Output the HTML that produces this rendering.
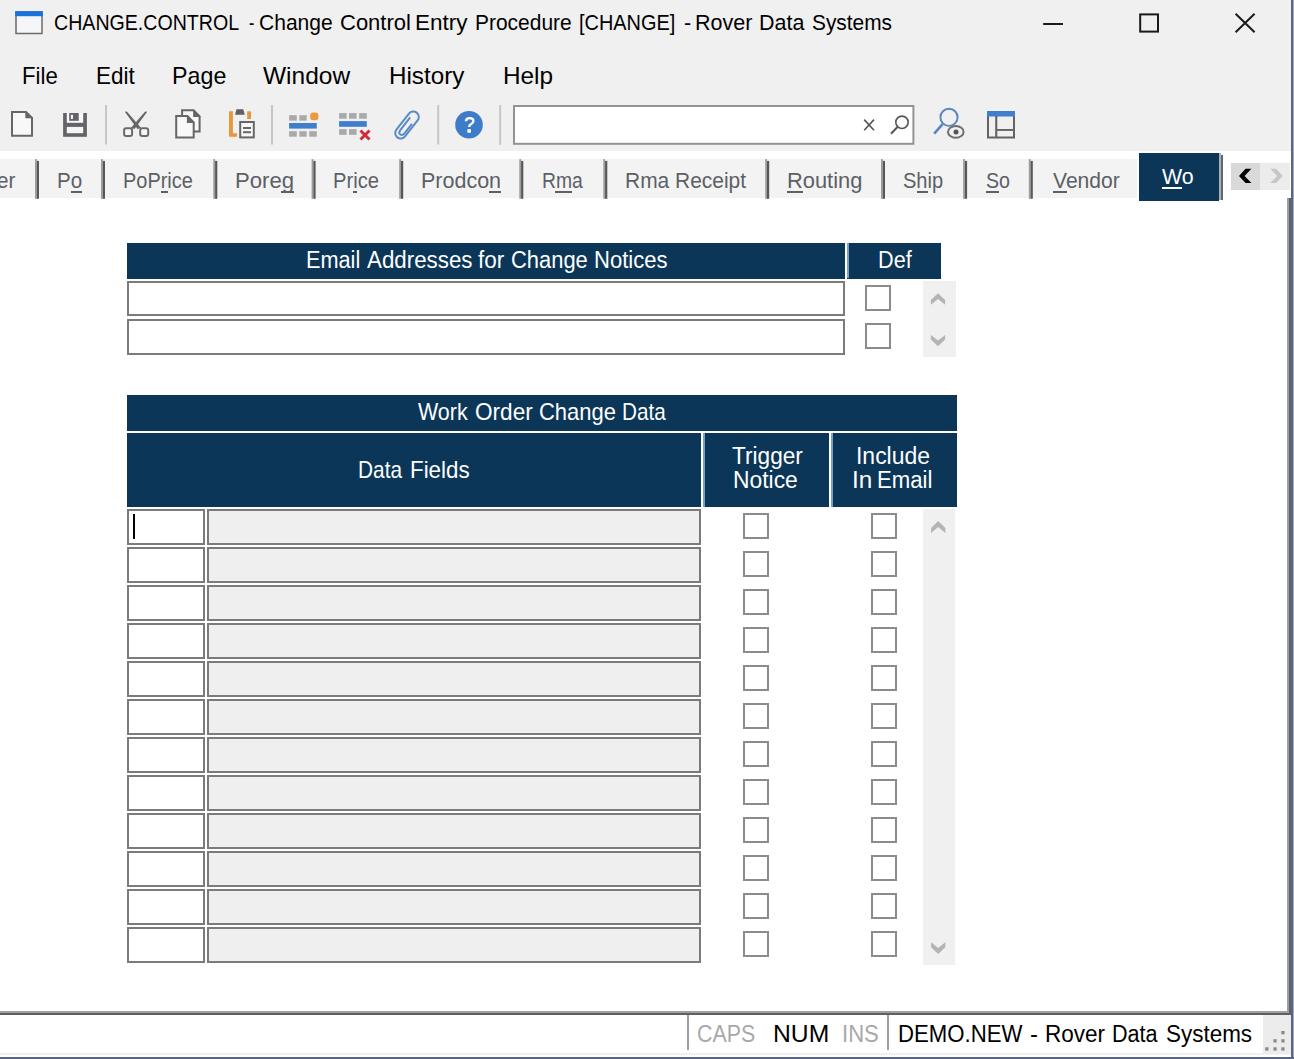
<!DOCTYPE html>
<html><head><meta charset="utf-8"><style>
html,body{margin:0;padding:0;}
body{width:1294px;height:1059px;position:relative;overflow:hidden;background:#fff;font-family:"Liberation Sans", sans-serif;}
.t{position:absolute;white-space:pre;transform-origin:0 0;font-family:"Liberation Sans", sans-serif;}
.r{position:absolute;}
.inp{position:absolute;box-sizing:border-box;border:2px solid #7b7b7b;background:#fff;}
.cb{position:absolute;box-sizing:border-box;width:25.8px;height:25.8px;border:2px solid #8c8c8c;background:#fff;}
.hdr{position:absolute;background:#0c3657;}
</style></head><body>
<div class=r style='left:0;top:0;width:1294px;height:150.8px;background:#f0f0f0'></div>
<div class=r style='left:0;top:159.1px;width:1136.5px;height:39.4px;background:#f3f3f3'></div>
<div class=r style='left:1139.2px;top:153.2px;width:79.7px;height:47.6px;background:#0c3657'></div>
<div class=r style='left:1218.9px;top:153.1px;width:2.2px;height:47.3px;background:#a5b0bf'></div>
<div class=r style='left:1221.1px;top:155.1px;width:1.9px;height:45.3px;background:#666'></div>
<div class=r style='left:1231px;top:163px;width:29.4px;height:26.5px;background:#d9d9d9'></div>
<div class=r style='left:1260.4px;top:163px;width:29.2px;height:26.5px;background:#ececec'></div>
<!-- email grid -->
<div class=hdr style='left:127px;top:243.1px;width:717.9px;height:35.5px'></div>
<div class=hdr style='left:847.2px;top:243.1px;width:93.5px;height:35.5px'></div>
<div class=r style='left:847.1px;top:243.1px;width:1.8px;height:35.4px;background:#7a9fcb'></div>
<div class=inp style='left:127px;top:281.2px;width:717.8px;height:35.3px'></div>
<div class=inp style='left:127px;top:319px;width:717.8px;height:35.5px'></div>
<div class=cb style='left:865.2px;top:285px'></div>
<div class=cb style='left:865.2px;top:323.1px'></div>
<div class=r style='left:923px;top:281px;width:32.5px;height:75.7px;background:#f0f0f0'></div>
<!-- wo grid -->
<div class=hdr style='left:127px;top:395.2px;width:829.7px;height:35.5px'></div>
<div class=hdr style='left:127px;top:433.2px;width:573.8px;height:73.4px'></div>
<div class=hdr style='left:703.3px;top:433.2px;width:126.1px;height:73.4px'></div>
<div class=hdr style='left:831.4px;top:433.2px;width:125.3px;height:73.4px'></div>
<div class=r style='left:703.2px;top:433.2px;width:1.8px;height:73.4px;background:#7a9fcb'></div>
<div class=r style='left:831.3px;top:433.2px;width:1.8px;height:73.4px;background:#7a9fcb'></div>
<div class=inp style='left:127px;top:509px;width:78px;height:35.5px'></div>
<div class=inp style='left:207px;top:509px;width:494px;height:35.5px;background:#efefef'></div>
<div class=cb style='left:743.1px;top:513px'></div>
<div class=cb style='left:871.3px;top:513px'></div>
<div class=inp style='left:127px;top:547px;width:78px;height:35.5px'></div>
<div class=inp style='left:207px;top:547px;width:494px;height:35.5px;background:#efefef'></div>
<div class=cb style='left:743.1px;top:551px'></div>
<div class=cb style='left:871.3px;top:551px'></div>
<div class=inp style='left:127px;top:585px;width:78px;height:35.5px'></div>
<div class=inp style='left:207px;top:585px;width:494px;height:35.5px;background:#efefef'></div>
<div class=cb style='left:743.1px;top:589px'></div>
<div class=cb style='left:871.3px;top:589px'></div>
<div class=inp style='left:127px;top:623px;width:78px;height:35.5px'></div>
<div class=inp style='left:207px;top:623px;width:494px;height:35.5px;background:#efefef'></div>
<div class=cb style='left:743.1px;top:627px'></div>
<div class=cb style='left:871.3px;top:627px'></div>
<div class=inp style='left:127px;top:661px;width:78px;height:35.5px'></div>
<div class=inp style='left:207px;top:661px;width:494px;height:35.5px;background:#efefef'></div>
<div class=cb style='left:743.1px;top:665px'></div>
<div class=cb style='left:871.3px;top:665px'></div>
<div class=inp style='left:127px;top:699px;width:78px;height:35.5px'></div>
<div class=inp style='left:207px;top:699px;width:494px;height:35.5px;background:#efefef'></div>
<div class=cb style='left:743.1px;top:703px'></div>
<div class=cb style='left:871.3px;top:703px'></div>
<div class=inp style='left:127px;top:737px;width:78px;height:35.5px'></div>
<div class=inp style='left:207px;top:737px;width:494px;height:35.5px;background:#efefef'></div>
<div class=cb style='left:743.1px;top:741px'></div>
<div class=cb style='left:871.3px;top:741px'></div>
<div class=inp style='left:127px;top:775px;width:78px;height:35.5px'></div>
<div class=inp style='left:207px;top:775px;width:494px;height:35.5px;background:#efefef'></div>
<div class=cb style='left:743.1px;top:779px'></div>
<div class=cb style='left:871.3px;top:779px'></div>
<div class=inp style='left:127px;top:813px;width:78px;height:35.5px'></div>
<div class=inp style='left:207px;top:813px;width:494px;height:35.5px;background:#efefef'></div>
<div class=cb style='left:743.1px;top:817px'></div>
<div class=cb style='left:871.3px;top:817px'></div>
<div class=inp style='left:127px;top:851px;width:78px;height:35.5px'></div>
<div class=inp style='left:207px;top:851px;width:494px;height:35.5px;background:#efefef'></div>
<div class=cb style='left:743.1px;top:855px'></div>
<div class=cb style='left:871.3px;top:855px'></div>
<div class=inp style='left:127px;top:889px;width:78px;height:35.5px'></div>
<div class=inp style='left:207px;top:889px;width:494px;height:35.5px;background:#efefef'></div>
<div class=cb style='left:743.1px;top:893px'></div>
<div class=cb style='left:871.3px;top:893px'></div>
<div class=inp style='left:127px;top:927px;width:78px;height:35.5px'></div>
<div class=inp style='left:207px;top:927px;width:494px;height:35.5px;background:#efefef'></div>
<div class=cb style='left:743.1px;top:931px'></div>
<div class=cb style='left:871.3px;top:931px'></div>
<div class=r style='left:923.3px;top:508.6px;width:32.2px;height:456.2px;background:#f0f0f0'></div>
<div class=r style='left:133px;top:513.5px;width:2.2px;height:25.5px;background:#000'></div>
<!-- status -->
<div class=r style='left:0;top:1010.8px;width:1289.4px;height:2px;background:#a0a0a0'></div>
<div class=r style='left:0;top:1012.8px;width:1289.4px;height:2.1px;background:#5e5e5e'></div>
<div class=r style='left:0;top:1052.9px;width:1291px;height:2.6px;background:#f0f0f0'></div>
<div class=r style='left:1262.7px;top:1015px;width:28px;height:38px;background:#ececec'></div>
<div class=r style='left:687.4px;top:1015px;width:2px;height:34.6px;background:#a0a0a0'></div>
<div class=r style='left:886.5px;top:1015px;width:2px;height:34.6px;background:#a0a0a0'></div>
<div class=r style='left:1286.8px;top:198px;width:2.3px;height:813px;background:#9aa09c'></div>
<div class=r style='left:1289.1px;top:198px;width:1.7px;height:817px;background:#5a6370'></div>
<div class=r style='left:1290.8px;top:0;width:2.4px;height:1059px;background:#5c6582'></div>
<div class=r style='left:1293.2px;top:0;width:0.8px;height:1059px;background:#a3abc4'></div>
<div class=r style='left:0;top:1056.8px;width:1294px;height:2.2px;background:#5a6586'></div>
<svg width="1294" height="1059" viewBox="0 0 1294 1059" style="position:absolute;left:0;top:0">
<!-- title icon -->
<rect x="16" y="12" width="26" height="21.5" fill="#f4f6f8" stroke="#6a6a6a" stroke-width="1.5"/>
<rect x="15.2" y="11.2" width="27.6" height="5" fill="#1874d8"/>
<!-- window buttons -->
<rect x="1043.2" y="23" width="19.8" height="2" fill="#1a1a1a"/>
<rect x="1140.2" y="14.4" width="17.8" height="17.2" fill="none" stroke="#1a1a1a" stroke-width="2"/>
<path d="M1235.6 13.8 L1254.6 32.2 M1254.6 13.8 L1235.6 32.2" stroke="#1a1a1a" stroke-width="2"/>
<!-- new doc -->
<path d="M12 112 H26 L32 118 V135.7 H12 Z" fill="#f8f8f8" stroke="#666" stroke-width="2"/>
<path d="M25.3 111 L33 118.3 H25.3 Z" fill="#666"/>
<!-- save -->
<rect x="63.1" y="113" width="23.8" height="23.8" fill="#636369"/>
<rect x="66.8" y="113" width="16.4" height="9.8" fill="#f8f8f8"/>
<rect x="69.2" y="113" width="9.5" height="7.8" fill="#636369"/>
<rect x="70.9" y="114.8" width="2.1" height="4.1" fill="#f8f8f8"/>
<rect x="66.8" y="126.9" width="16.4" height="6.3" fill="#f4f4f4"/>
<!-- separator -->
<rect x="105" y="105" width="2" height="39.5" fill="#c6c6c6"/>
<!-- scissors -->
<path d="M124.8 111.8 L126.8 111.6 L141.2 128 L137.4 129 Z" fill="#666"/>
<path d="M147.2 111.8 L145.2 111.6 L130.8 128 L134.6 129 Z" fill="#666"/>
<rect x="124.1" y="128.3" width="8" height="7.6" rx="2.2" fill="#f8f8f8" stroke="#6a6a6a" stroke-width="2"/>
<rect x="140.2" y="128.3" width="8" height="7.6" rx="2.2" fill="#f8f8f8" stroke="#6a6a6a" stroke-width="2"/>
<!-- copy -->
<path d="M182.1 110.2 H193.6 L199.6 116.5 V131.5 H182.1 Z" fill="#f8f8f8" stroke="#666" stroke-width="2"/>
<path d="M193.1 109.2 L200.6 117 H193.1 Z" fill="#666"/>
<path d="M176.2 116.1 H187.4 L193.7 122.4 V137.4 H176.2 Z" fill="#f8f8f8" stroke="#666" stroke-width="2"/>
<path d="M186.9 115.1 L194.7 123 H186.9 Z" fill="#666"/>
<!-- paste -->
<path d="M229 111.3 H232.9 V133.2 H237.1 V136.7 H229 Z" fill="#e8963c"/>
<rect x="247.2" y="111.3" width="3.8" height="7.7" fill="#e8963c"/>
<path d="M236.5 109.2 H243.3 L244.8 114.8 H235 Z" fill="#5f6166"/>
<rect x="240.2" y="122" width="13.6" height="15.4" fill="#f8f8f8" stroke="#666" stroke-width="2"/>
<rect x="243" y="127" width="8" height="2" fill="#666"/>
<rect x="243" y="131.2" width="8" height="2" fill="#666"/>
<!-- separator -->
<rect x="271" y="105" width="2" height="39.5" fill="#c6c6c6"/>
<!-- insert grid -->
<g fill="#a9a9a9">
<rect x="289.1" y="115.2" width="7.7" height="5.4"/><rect x="299.3" y="115.2" width="7.4" height="5.4"/>
<rect x="289.1" y="131.2" width="7.7" height="5.5"/><rect x="299.3" y="131.2" width="7.4" height="5.5"/><rect x="309.2" y="131.2" width="7.6" height="5.5"/>
</g>
<rect x="310.2" y="112.4" width="8.2" height="7.8" rx="3" fill="#ee9a3a"/>
<rect x="289.1" y="123" width="27.7" height="5.6" fill="#3f7fcc"/>
<!-- delete grid -->
<g fill="#a9a9a9">
<rect x="339.1" y="113.1" width="7.6" height="5.6"/><rect x="349" y="113.1" width="7.6" height="5.6"/><rect x="359.2" y="113.1" width="7.6" height="5.6"/>
<rect x="339.1" y="129.1" width="7.6" height="5.7"/><rect x="349" y="129.1" width="7.6" height="5.7"/>
</g>
<rect x="339.1" y="121.1" width="27.7" height="5.7" fill="#3f7fcc"/>
<path d="M360.5 130.5 L369.5 139.5 M369.5 130.5 L360.5 139.5" stroke="#d02a3c" stroke-width="3"/>
<!-- paperclip -->
<g transform="rotate(38 407 125)" fill="none" stroke="#5a8ac6" stroke-width="2">
<rect x="401.5" y="109.3" width="11" height="31.4" rx="5.5"/>
<path d="M404.8 117 V132.5 Q404.8 136.6 407.5 136.6 Q410.2 136.6 410.2 132.5 V121"/>
</g>
<!-- separator -->
<rect x="437.2" y="105" width="2" height="39.5" fill="#c6c6c6"/>
<!-- help -->
<circle cx="469" cy="124.7" r="13.8" fill="#3d7cc9"/>
<path d="M466 121.2 Q466 118.1 469.6 118.1 Q473.4 118.1 473.4 121 Q473.4 123 471.2 124 Q469.2 124.8 469.2 127" fill="none" stroke="#fff" stroke-width="2.4"/>
<rect x="467.4" y="129.2" width="3.5" height="3.5" fill="#fff"/>
<!-- separator -->
<rect x="499.2" y="105" width="2" height="39.8" fill="#c6c6c6"/>
<!-- search box -->
<rect x="514" y="106" width="399.4" height="37.8" fill="#fff" stroke="#939393" stroke-width="2"/>
<path d="M864.2 119.6 L874 130.2 M874 119.6 L864.2 130.2" stroke="#555" stroke-width="1.6"/>
<circle cx="902" cy="122.3" r="6.2" fill="none" stroke="#555" stroke-width="1.6"/>
<path d="M897.5 127 L891 133.8" stroke="#555" stroke-width="2"/>
<!-- find-eye -->
<circle cx="949" cy="117.3" r="8.6" fill="none" stroke="#5585c2" stroke-width="1.9"/>
<path d="M942.6 124.2 L934.2 133.6" stroke="#5585c2" stroke-width="2.6"/>
<ellipse cx="955.8" cy="131.9" rx="7.8" ry="5.8" fill="#f0f0f0" stroke="#6e6e6e" stroke-width="2"/>
<circle cx="956" cy="131.9" r="2.5" fill="#555"/>
<!-- layout -->
<rect x="988" y="112" width="26" height="25.5" fill="none" stroke="#636366" stroke-width="2"/>
<rect x="987" y="111" width="28" height="5.5" fill="#3f7fcc"/>
<rect x="995.2" y="116" width="2.1" height="21" fill="#636366"/>
<rect x="996" y="129" width="18" height="1.9" fill="#636366"/>
<!-- tab separators -->
<rect x="35.0" y="159.1" width="1.8" height="39.7" fill="#9c9c9c"/><rect x="36.8" y="160.9" width="2.2" height="37.9" fill="#575757"/>
<rect x="101.0" y="159.1" width="1.8" height="39.7" fill="#9c9c9c"/><rect x="102.8" y="160.9" width="2.2" height="37.9" fill="#575757"/>
<rect x="213.3" y="159.1" width="1.8" height="39.7" fill="#9c9c9c"/><rect x="215.1" y="160.9" width="2.2" height="37.9" fill="#575757"/>
<rect x="311.6" y="159.1" width="1.8" height="39.7" fill="#9c9c9c"/><rect x="313.4" y="160.9" width="2.2" height="37.9" fill="#575757"/>
<rect x="399.2" y="159.1" width="1.8" height="39.7" fill="#9c9c9c"/><rect x="401.0" y="160.9" width="2.2" height="37.9" fill="#575757"/>
<rect x="519.3" y="159.1" width="1.8" height="39.7" fill="#9c9c9c"/><rect x="521.1" y="160.9" width="2.2" height="37.9" fill="#575757"/>
<rect x="603.3" y="159.1" width="1.8" height="39.7" fill="#9c9c9c"/><rect x="605.1" y="160.9" width="2.2" height="37.9" fill="#575757"/>
<rect x="765.2" y="159.1" width="1.8" height="39.7" fill="#9c9c9c"/><rect x="767.0" y="160.9" width="2.2" height="37.9" fill="#575757"/>
<rect x="881.0" y="159.1" width="1.8" height="39.7" fill="#9c9c9c"/><rect x="882.8" y="160.9" width="2.2" height="37.9" fill="#575757"/>
<rect x="963.1" y="159.1" width="1.8" height="39.7" fill="#9c9c9c"/><rect x="964.9" y="160.9" width="2.2" height="37.9" fill="#575757"/>
<rect x="1028.8" y="159.1" width="1.8" height="39.7" fill="#9c9c9c"/><rect x="1030.6" y="160.9" width="2.2" height="37.9" fill="#575757"/>
<!-- tab scroll arrows -->
<path d="M1251.4 168.8 L1245.6 168.8 L1239 175.9 L1245.6 183 L1251.4 183 L1244.6 175.9 Z" fill="#000"/>
<path d="M1270.3 168.8 L1276.1 168.8 L1282.7 175.9 L1276.1 183 L1270.3 183 L1277.1 175.9 Z" fill="#c6c6c6"/>
<!-- email scroll arrows -->
<path d="M930.9 300.0 L938.0 293.3 L945.1 300.0 L945.1 304.8 L938.0 299.1 L930.9 304.8 Z" fill="#b4b4b4"/>
<path d="M930.9 339.6 L938.0 346.2 L945.1 339.6 L945.1 334.9 L938.0 340.5 L930.9 334.9 Z" fill="#b4b4b4"/>
<!-- wo scroll arrows -->
<path d="M931.1 528.0 L938.2 521.0 L945.3 528.0 L945.3 533.0 L938.2 527.0 L931.1 533.0 Z" fill="#b4b4b4"/>
<path d="M931.1 947.2 L938.2 953.9 L945.3 947.2 L945.3 942.3 L938.2 948.1 L931.1 942.3 Z" fill="#b4b4b4"/>
<!-- grip -->
<g fill="#8a8a8a">
<rect x="1281.3" y="1031" width="3.3" height="3.3"/>
<rect x="1273.4" y="1039.2" width="3.3" height="3.3"/><rect x="1281.3" y="1039.2" width="3.3" height="3.3"/>
<rect x="1265.2" y="1047.3" width="3.3" height="3.3"/><rect x="1273.4" y="1047.3" width="3.3" height="3.3"/><rect x="1281.3" y="1047.3" width="3.3" height="3.3"/>
</g>
</svg>

<div class=t style='left:53.91px;top:12.28px;font-size:22px;line-height:22px;color:#000;transform:scaleX(0.8908)'>CHANGE.CONTROL</div>
<div class=t style='left:249.00px;top:12.28px;font-size:22px;line-height:22px;color:#000;transform:scaleX(0.7143)'>-</div>
<div class=t style='left:259.44px;top:12.28px;font-size:22px;line-height:22px;color:#000;transform:scaleX(0.9561)'>Change</div>
<div class=t style='left:340.00px;top:12.28px;font-size:22px;line-height:22px;color:#000;transform:scaleX(0.9995)'>Control</div>
<div class=t style='left:415.38px;top:12.28px;font-size:22px;line-height:22px;color:#000;transform:scaleX(1.0229)'>Entry</div>
<div class=t style='left:474.55px;top:12.28px;font-size:22px;line-height:22px;color:#000;transform:scaleX(0.9525)'>Procedure</div>
<div class=t style='left:579.29px;top:12.28px;font-size:22px;line-height:22px;color:#000;transform:scaleX(0.9056)'>[CHANGE]</div>
<div class=t style='left:683.70px;top:12.28px;font-size:22px;line-height:22px;color:#000;transform:scaleX(0.9714)'>-</div>
<div class=t style='left:695.22px;top:12.28px;font-size:22px;line-height:22px;color:#000;transform:scaleX(0.9781)'>Rover</div>
<div class=t style='left:758.92px;top:12.28px;font-size:22px;line-height:22px;color:#000;transform:scaleX(0.9754)'>Data</div>
<div class=t style='left:811.75px;top:12.28px;font-size:22px;line-height:22px;color:#000;transform:scaleX(0.9478)'>Systems</div>
<div class=t style='left:21.58px;top:64.28px;font-size:24.0px;line-height:24.0px;color:#000;transform:scaleX(0.9243)'>File</div>
<div class=t style='left:95.96px;top:64.28px;font-size:24.0px;line-height:24.0px;color:#000;transform:scaleX(0.9364)'>Edit</div>
<div class=t style='left:172.03px;top:64.28px;font-size:24.0px;line-height:24.0px;color:#000;transform:scaleX(0.9689)'>Page</div>
<div class=t style='left:263.10px;top:64.28px;font-size:24.0px;line-height:24.0px;color:#000;transform:scaleX(1.0206)'>Window</div>
<div class=t style='left:389.29px;top:64.28px;font-size:24.0px;line-height:24.0px;color:#000;transform:scaleX(1.0085)'>History</div>
<div class=t style='left:502.99px;top:64.28px;font-size:24.0px;line-height:24.0px;color:#000;transform:scaleX(1.0143)'>Help</div>
<div class=t style='left:-3.00px;top:169.78px;font-size:22px;line-height:22px;color:#5c5f66;transform:scaleX(0.9358)'>er</div>
<div class=t style='left:57.07px;top:169.78px;font-size:22px;line-height:22px;color:#5c5f66;transform:scaleX(0.9348)'>Po</div>
<div style='position:absolute;left:70.78px;top:191.40px;width:11.44px;height:1.5px;background:#5c5f66'></div>
<div class=t style='left:123.29px;top:169.78px;font-size:22px;line-height:22px;color:#5c5f66;transform:scaleX(0.9064)'>PoPrice</div>
<div style='position:absolute;left:160.98px;top:191.40px;width:6.64px;height:1.5px;background:#5c5f66'></div>
<div class=t style='left:234.69px;top:169.78px;font-size:22px;line-height:22px;color:#5c5f66;transform:scaleX(1.0058)'>Poreg</div>
<div style='position:absolute;left:281.44px;top:191.40px;width:12.31px;height:1.5px;background:#5c5f66'></div>
<div class=t style='left:332.78px;top:169.78px;font-size:22px;line-height:22px;color:#5c5f66;transform:scaleX(0.9164)'>Price</div>
<div style='position:absolute;left:352.94px;top:191.40px;width:4.48px;height:1.5px;background:#5c5f66'></div>
<div class=t style='left:421.32px;top:169.78px;font-size:22px;line-height:22px;color:#5c5f66;transform:scaleX(0.9773)'>Prodcon</div>
<div style='position:absolute;left:489.45px;top:191.40px;width:11.96px;height:1.5px;background:#5c5f66'></div>
<div class=t style='left:541.52px;top:169.78px;font-size:22px;line-height:22px;color:#5c5f66;transform:scaleX(0.8785)'>Rma</div>
<div style='position:absolute;left:555.48px;top:191.40px;width:16.10px;height:1.5px;background:#5c5f66'></div>
<div class=t style='left:625.05px;top:169.78px;font-size:22px;line-height:22px;color:#5c5f66;transform:scaleX(0.9521)'>Rma Receipt</div>
<div class=t style='left:787.21px;top:169.78px;font-size:22px;line-height:22px;color:#5c5f66;transform:scaleX(0.9933)'>Routing</div>
<div style='position:absolute;left:787.21px;top:191.40px;width:15.78px;height:1.5px;background:#5c5f66'></div>
<div class=t style='left:903.49px;top:169.78px;font-size:22px;line-height:22px;color:#5c5f66;transform:scaleX(0.9113)'>Ship</div>
<div style='position:absolute;left:916.86px;top:191.40px;width:11.15px;height:1.5px;background:#5c5f66'></div>
<div class=t style='left:985.51px;top:169.78px;font-size:22px;line-height:22px;color:#5c5f66;transform:scaleX(0.8920)'>So</div>
<div style='position:absolute;left:985.51px;top:191.40px;width:13.09px;height:1.5px;background:#5c5f66'></div>
<div class=t style='left:1052.60px;top:169.78px;font-size:22px;line-height:22px;color:#5c5f66;transform:scaleX(0.9568)'>Vendor</div>
<div style='position:absolute;left:1052.60px;top:191.40px;width:14.04px;height:1.5px;background:#5c5f66'></div>
<div class=t style='left:1162.30px;top:165.78px;font-size:22px;line-height:22px;color:#fff;transform:scaleX(0.9701)'>Wo</div>
<div style='position:absolute;left:1162.30px;top:187.40px;width:20.14px;height:1.5px;background:#fff'></div>
<div class=t style='left:305.58px;top:248.61px;font-size:23.5px;line-height:23.5px;color:#fff;transform:scaleX(0.9232)'>Email</div>
<div class=t style='left:367.00px;top:248.61px;font-size:23.5px;line-height:23.5px;color:#fff;transform:scaleX(0.9503)'>Addresses</div>
<div class=t style='left:477.70px;top:248.61px;font-size:23.5px;line-height:23.5px;color:#fff;transform:scaleX(0.9566)'>for</div>
<div class=t style='left:511.07px;top:248.61px;font-size:23.5px;line-height:23.5px;color:#fff;transform:scaleX(0.9329)'>Change</div>
<div class=t style='left:594.26px;top:248.61px;font-size:23.5px;line-height:23.5px;color:#fff;transform:scaleX(0.9385)'>Notices</div>
<div class=t style='left:877.98px;top:248.51px;font-size:23.5px;line-height:23.5px;color:#fff;transform:scaleX(0.9212)'>Def</div>
<div class=t style='left:417.90px;top:400.38px;font-size:24.0px;line-height:24.0px;color:#fff;transform:scaleX(0.8929)'>Work</div>
<div class=t style='left:475.36px;top:400.38px;font-size:24.0px;line-height:24.0px;color:#fff;transform:scaleX(0.9411)'>Order</div>
<div class=t style='left:538.88px;top:400.38px;font-size:24.0px;line-height:24.0px;color:#fff;transform:scaleX(0.9151)'>Change</div>
<div class=t style='left:621.94px;top:400.38px;font-size:24.0px;line-height:24.0px;color:#fff;transform:scaleX(0.8620)'>Data</div>
<div class=t style='left:357.63px;top:458.28px;font-size:24.0px;line-height:24.0px;color:#fff;transform:scaleX(0.8680)'>Data</div>
<div class=t style='left:409.87px;top:458.28px;font-size:24.0px;line-height:24.0px;color:#fff;transform:scaleX(0.9315)'>Fields</div>
<div class=t style='left:731.70px;top:444.63px;font-size:23.0px;line-height:23.0px;color:#fff;transform:scaleX(0.9842)'>Trigger</div>
<div class=t style='left:733.21px;top:468.83px;font-size:23.0px;line-height:23.0px;color:#fff;transform:scaleX(0.9937)'>Notice</div>
<div class=t style='left:855.80px;top:444.63px;font-size:23.0px;line-height:23.0px;color:#fff;transform:scaleX(0.9976)'>Include</div>
<div class=t style='left:851.99px;top:468.83px;font-size:23.0px;line-height:23.0px;color:#fff;transform:scaleX(1.0555)'>In</div>
<div class=t style='left:877.14px;top:468.83px;font-size:23.0px;line-height:23.0px;color:#fff;transform:scaleX(0.9639)'>Email</div>
<div class=t style='left:697.37px;top:1022.73px;font-size:23.0px;line-height:23.0px;color:#a8a8a8;transform:scaleX(0.9284)'>CAPS</div>
<div class=t style='left:773.13px;top:1022.73px;font-size:23.0px;line-height:23.0px;color:#000;transform:scaleX(1.0733)'>NUM</div>
<div class=t style='left:842.28px;top:1022.73px;font-size:23.0px;line-height:23.0px;color:#a8a8a8;transform:scaleX(0.9611)'>INS</div>
<div class=t style='left:897.56px;top:1022.61px;font-size:23.5px;line-height:23.5px;color:#000;transform:scaleX(0.9440)'>DEMO.NEW</div>
<div class=t style='left:1030.48px;top:1022.61px;font-size:23.5px;line-height:23.5px;color:#000;transform:scaleX(1.0167)'>-</div>
<div class=t style='left:1045.04px;top:1022.61px;font-size:23.5px;line-height:23.5px;color:#000;transform:scaleX(0.9586)'>Rover</div>
<div class=t style='left:1111.78px;top:1022.61px;font-size:23.5px;line-height:23.5px;color:#000;transform:scaleX(0.9179)'>Data</div>
<div class=t style='left:1165.54px;top:1022.61px;font-size:23.5px;line-height:23.5px;color:#000;transform:scaleX(0.9553)'>Systems</div>
</body></html>
